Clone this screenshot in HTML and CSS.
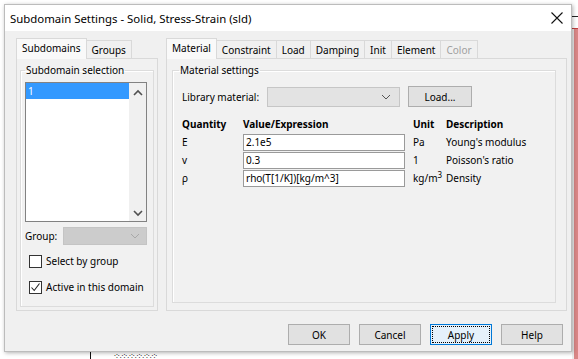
FILE: index.html
```html
<!DOCTYPE html>
<html lang="en">

<head>
    <meta charset="UTF-8">
    <title>Subdomain Settings</title>
    <link rel="stylesheet" href="styles.css">
</head>

<body>
    <div class="screen">
        <div class="dialog">
            <div class="titlebar">
                <span class="title">Subdomain Settings - Solid, Stress-Strain (sld)</span>
                <svg class="close" width="12" height="12" viewBox="0 0 12 12">
                    <path d="M0.5 0.5 L11.5 11.5 M11.5 0.5 L0.5 11.5" stroke="#111" stroke-width="1.1" fill="none" />
                </svg>
            </div>

            <div class="content">
                <div class="panes">
                    <!-- left: subdomains -->
                    <div class="tabset left">
                        <div class="tabs">
                            <div class="tab active">Subdomains</div>
                            <div class="tab">Groups</div>
                        </div>
                        <div class="panel">
                            <fieldset class="group">
                                <legend>Subdomain selection</legend>
                                <div class="listbox">
                                    <ul class="items">
                                        <li class="selected">1</li>
                                    </ul>
                                    <div class="scrollbar">
                                        <svg width="10" height="7" viewBox="0 0 10 7">
                                            <path d="M1 6 L5 2 L9 6" stroke="#505050" stroke-width="1.6" fill="none" />
                                        </svg>
                                        <svg width="10" height="7" viewBox="0 0 10 7">
                                            <path d="M1 1 L5 5 L9 1" stroke="#505050" stroke-width="1.6" fill="none" />
                                        </svg>
                                    </div>
                                </div>
                                <div class="group-row">
                                    <span>Group:</span>
                                    <div class="combo disabled">
                                        <svg width="10" height="6" viewBox="0 0 10 6">
                                            <path d="M1 1 L5 5 L9 1" stroke="#a8a8a8" stroke-width="1" fill="none" />
                                        </svg>
                                    </div>
                                </div>
                                <label class="check"><span class="box"></span>Select by group</label>
                                <label class="check"><span class="box">
                                        <svg width="11" height="11" viewBox="0 0 11 11">
                                            <path d="M1.5 5.5 L4.2 8.5 L9.5 1.5" stroke="#222" stroke-width="1.1" fill="none" />
                                        </svg>
                                    </span>Active in this domain</label>
                            </fieldset>
                        </div>
                    </div>

                    <!-- right: material -->
                    <div class="tabset right">
                        <div class="tabs">
                            <div class="tab active">Material</div>
                            <div class="tab">Constraint</div>
                            <div class="tab">Load</div>
                            <div class="tab">Damping</div>
                            <div class="tab">Init</div>
                            <div class="tab">Element</div>
                            <div class="tab off">Color</div>
                        </div>
                        <div class="panel">
                            <fieldset class="group settings">
                                <legend>Material settings</legend>
                                <div class="library-row">
                                    <span class="lib-label">Library material:</span>
                                    <div class="combo library">
                                        <svg width="10" height="6" viewBox="0 0 10 6">
                                            <path d="M1 1 L5 5 L9 1" stroke="#555" stroke-width="1" fill="none" />
                                        </svg>
                                    </div>
                                    <button class="btn load">Load...</button>
                                </div>

                                <div class="params">
                                    <span class="head">Quantity</span>
                                    <span class="head">Value/Expression</span>
                                    <span class="head">Unit</span>
                                    <span class="head">Description</span>

                                    <span>E</span>
                                    <input class="field" value="2.1e5">
                                    <span>Pa</span>
                                    <span>Young's modulus</span>

                                    <span>v</span>
                                    <input class="field" value="0.3">
                                    <span>1</span>
                                    <span>Poisson's ratio</span>

                                    <span>ρ</span>
                                    <input class="field" value="rho(T[1/K])[kg/m^3]">
                                    <span>kg/m<sup>3</sup></span>
                                    <span>Density</span>
                                </div>
                            </fieldset>
                        </div>
                    </div>
                </div>

                <div class="buttons">
                    <button class="btn">OK</button>
                    <button class="btn">Cancel</button>
                    <button class="btn focused">Apply</button>
                    <button class="btn">Help</button>
                </div>
            </div>
        </div>

        <div class="behind-right">
            <div class="tick"></div>
            <div class="red"></div>
        </div>
        <div class="behind-bottom">
            <span class="mark"></span>
            <span class="dots">·:·.·:·.·:·.·:·.·:·.·:·</span>
        </div>
    </div>
</body>

</html>
```

FILE: styles.css
```css
body {
    margin: 0;
    font-family: "Noto Sans", sans-serif;
    font-size: 10px;
    color: #000;
    background: #fff;
}

.screen {
    display: grid;
    grid-template-columns: 572px 6px;
    grid-template-rows: 352px 7px;
    width: 578px;
    height: 359px;
    overflow: hidden;
}

.dialog {
    grid-column: 1;
    grid-row: 1;
    margin: 4px 0 0 4px;
    border: 1px solid #bcbcbc;
    box-shadow: 1px 1px 4px rgba(0, 0, 0, 0.3);
    background: #f0f0f0;
    display: flex;
    flex-direction: column;
    position: relative;
    z-index: 1;
}

.titlebar {
    height: 26px;
    background: #fff;
    display: flex;
    align-items: center;
    justify-content: space-between;
    padding: 0 8px 0 5px;
    font-size: 11.4px;
}

.content {
    flex: 1;
    padding: 7px 4px 0 11px;
}

.panes {
    display: flex;
    gap: 8px;
}

.tabset.left {
    width: 142px;
}

.tabset.right {
    width: 401px;
}

.tabs {
    display: flex;
    align-items: flex-end;
    height: 20px;
}

.tab {
    height: 18px;
    line-height: 18px;
    padding: 0 5px;
    border: 1px solid #d9d9d9;
    border-bottom: none;
    margin-right: -1px;
    box-sizing: border-box;
    background: #f0f0f0;
    white-space: nowrap;
}

.tab.active {
    height: 21px;
    line-height: 19px;
    margin-bottom: -1px;
    background: #f9f9f9;
    position: relative;
    z-index: 1;
}

.tab.off {
    color: #a0a0a0;
}

.panel {
    height: 253px;
    box-sizing: border-box;
    border: 1px solid #d9d9d9;
    background: #f1f1f1;
    padding: 4px 3px 3px 3px;
    display: flex;
}

.right .panel {
    padding: 4px 10px 7px 5px;
}

.group {
    flex: 1;
    margin: 0;
    border: 1px solid #dcdcdc;
    box-shadow: inset 1px 1px 0 #fff;
    padding: 5px 6px 0 4px;
    min-width: 0;
}

.group legend {
    padding: 0 1px;
}

.settings {
    padding: 7px 0 0 9px;
}

.settings legend {
    margin-left: -3px;
}

/* list box */

.listbox {
    height: 140px;
    box-sizing: border-box;
    border: 1px solid #828282;
    background: #fff;
    display: flex;
}

.items {
    flex: 1;
    list-style: none;
    margin: 0;
    padding: 0;
}

.items li {
    height: 16px;
    line-height: 16px;
    padding-left: 2px;
}

.items li.selected {
    background: #3399ff;
    color: #fff;
}

.scrollbar {
    width: 17px;
    background: #f0f0f0;
    display: flex;
    flex-direction: column;
    justify-content: space-between;
    align-items: center;
    padding: 6px 0 4px;
}

.group-row {
    display: flex;
    align-items: center;
    justify-content: space-between;
    margin-top: 5px;
}

.combo {
    height: 18px;
    box-sizing: border-box;
    border: 1px solid #bcbcbc;
    display: flex;
    align-items: center;
    justify-content: flex-end;
    padding-right: 6px;
}

.combo.disabled {
    width: 84px;
    background: #cccccc;
    border-color: #c4c4c4;
}

.check {
    display: flex;
    align-items: center;
    gap: 4px;
    margin-left: 4px;
    height: 14px;
    margin-top: 9px;
    white-space: nowrap;
}

.check+.check {
    margin-top: 12px;
}

.box {
    width: 13px;
    height: 13px;
    box-sizing: border-box;
    border: 1px solid #333;
    background: #fff;
    display: flex;
    align-items: center;
    justify-content: center;
}

/* material settings */

.library-row {
    display: flex;
    align-items: center;
    gap: 8px;
    margin-top: 2px;
}

.lib-label {
    width: 77px;
    white-space: nowrap;
}

.combo.library {
    width: 133px;
    height: 20px;
    background: #e3e3e3;
    border-color: #c6c6c6;
    padding-right: 8px;
}

.params {
    display: grid;
    grid-template-columns: 61px 170px 33px auto;
    grid-auto-rows: 18px;
    align-items: center;
    margin-top: 8px;
    white-space: nowrap;
}

.params .head {
    font-weight: bold;
}

.field {
    width: 162px;
    height: 17px;
    box-sizing: border-box;
    border: 1px solid #9a9a9a;
    padding: 0 2px;
    font: inherit;
    background: #fff;
}

.params sup {
    font-size: 8px;
    line-height: 0;
}

/* bottom buttons */

.buttons {
    display: flex;
    justify-content: flex-end;
    gap: 9px;
    margin: 13px 4px 0 0;
}

.btn {
    width: 62px;
    height: 21px;
    box-sizing: border-box;
    border: 1px solid #adadad;
    background: #e1e1e1;
    font: inherit;
    color: #000;
    padding: 0;
}

.btn.load {
    width: 64px;
    height: 21px;
}

.btn.focused {
    border-color: #0078d7;
    background: #e5f1fb;
    outline: 1px dotted #000;
    outline-offset: -3px;
}

/* what shows behind the dialog */

.behind-right {
    grid-column: 2;
    grid-row: 1 / 3;
    display: flex;
    flex-direction: column;
}

.tick {
    height: 28px;
    border-bottom: 1px solid #c04040;
    background: linear-gradient(#fff 16px, #222 16px, #222 17px, #fff 17px);
}

.red {
    flex: 1;
    background: #d98686;
    border-left: 2px solid #ececec;
}

.behind-bottom {
    grid-column: 1;
    grid-row: 2;
    display: flex;
    align-items: flex-start;
    font-size: 7px;
    line-height: 7px;
    color: #333;
}

.mark {
    width: 1px;
    height: 7px;
    background: #111;
    margin: 0 23px 0 90px;
}
```
